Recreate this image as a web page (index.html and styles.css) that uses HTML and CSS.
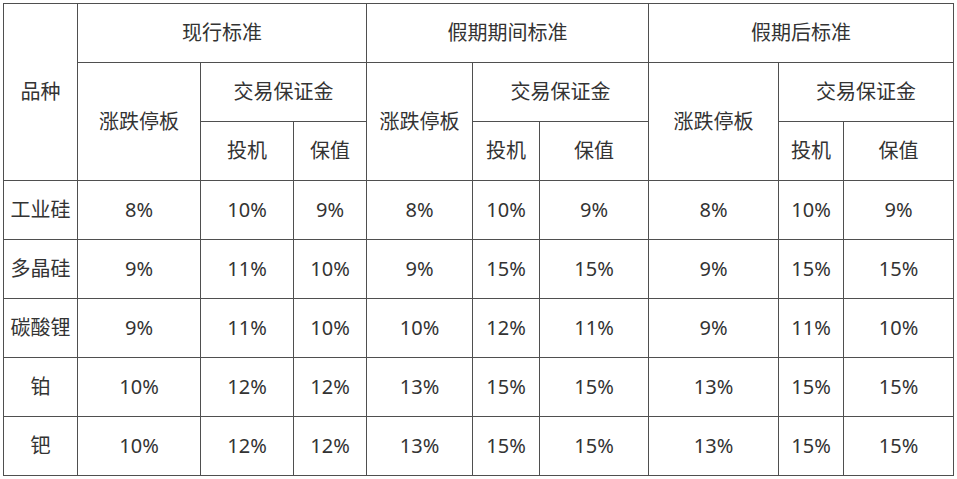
FILE: index.html
```html
<!DOCTYPE html>
<html lang="zh-CN">
<head>
<meta charset="utf-8">
<title>保证金标准</title>
<link rel="stylesheet" href="styles.css">
</head>
<body>
<table class="margin-table">
  <colgroup>
    <col class="c1"><col class="c2"><col class="c3"><col class="c4">
    <col class="c5"><col class="c6"><col class="c7">
    <col class="c8"><col class="c9"><col class="c10">
  </colgroup>
  <thead>
    <tr>
      <th rowspan="3">品种</th>
      <th colspan="3">现行标准</th>
      <th colspan="3">假期期间标准</th>
      <th colspan="3">假期后标准</th>
    </tr>
    <tr>
      <th rowspan="2">涨跌停板</th>
      <th colspan="2">交易保证金</th>
      <th rowspan="2">涨跌停板</th>
      <th colspan="2">交易保证金</th>
      <th rowspan="2">涨跌停板</th>
      <th colspan="2">交易保证金</th>
    </tr>
    <tr>
      <th>投机</th><th>保值</th>
      <th>投机</th><th>保值</th>
      <th>投机</th><th>保值</th>
    </tr>
  </thead>
  <tbody>
    <tr><td>工业硅</td><td>8%</td><td>10%</td><td>9%</td><td>8%</td><td>10%</td><td>9%</td><td>8%</td><td>10%</td><td>9%</td></tr>
    <tr><td>多晶硅</td><td>9%</td><td>11%</td><td>10%</td><td>9%</td><td>15%</td><td>15%</td><td>9%</td><td>15%</td><td>15%</td></tr>
    <tr><td>碳酸锂</td><td>9%</td><td>11%</td><td>10%</td><td>10%</td><td>12%</td><td>11%</td><td>9%</td><td>11%</td><td>10%</td></tr>
    <tr><td>铂</td><td>10%</td><td>12%</td><td>12%</td><td>13%</td><td>15%</td><td>15%</td><td>13%</td><td>15%</td><td>15%</td></tr>
    <tr><td>钯</td><td>10%</td><td>12%</td><td>12%</td><td>13%</td><td>15%</td><td>15%</td><td>13%</td><td>15%</td><td>15%</td></tr>
  </tbody>
</table>
</body>
</html>
```

FILE: styles.css
```css
html, body {
  margin: 0;
  padding: 0;
  background: #fff;
}
body {
  padding: 3px 0 0 3px;
}
.margin-table {
  border-collapse: collapse;
  table-layout: fixed;
  width: 950px;
  font-family: "Noto Sans", "Noto Sans CJK SC", sans-serif;
  font-size: 20px;
  color: #333;
}
.margin-table th,
.margin-table td {
  border: 1px solid #4f4f4f;
  height: 58px;
  padding: 0;
  text-align: center;
  vertical-align: middle;
  font-weight: normal;
  line-height: 1.2;
}
.c1 { width: 74px; }
.c2 { width: 123px; }
.c3 { width: 93px; }
.c4 { width: 73px; }
.c5 { width: 106px; }
.c6 { width: 67px; }
.c7 { width: 109px; }
.c8 { width: 130px; }
.c9 { width: 65px; }
.c10 { width: 110px; }
```
